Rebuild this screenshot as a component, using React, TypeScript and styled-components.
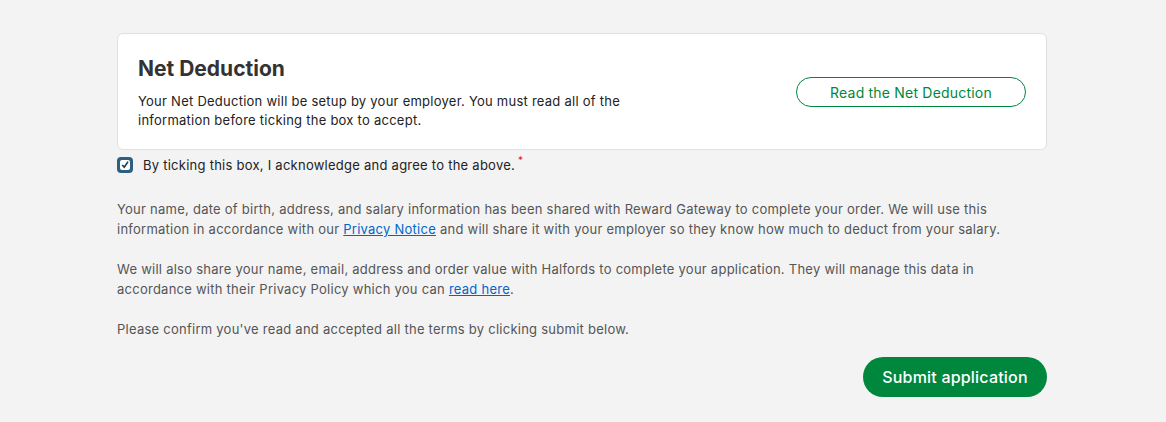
import * as React from 'react';
import styled, { createGlobalStyle } from 'styled-components';

const GlobalStyle = createGlobalStyle`
  body {
    margin: 0;
    background: #f3f3f3;
    font-family: Inter, "Noto Sans", sans-serif;
    color: #333;
  }
`;

const Page = styled.div`
  padding: 33px 119px 25px 117px;
`;

const Card = styled.section`
  display: flex;
  align-items: center;
  justify-content: space-between;
  background: #fff;
  border: 1px solid #e0e0e0;
  border-radius: 6px;
  padding: 20px 20px 19px;
`;

const CardText = styled.div`
  max-width: 540px;
`;

const Title = styled.h2`
  margin: 0 0 8px;
  font-size: 21px;
  font-weight: 700;
  line-height: 30px;
  color: #333;
`;

const Body = styled.p`
  margin: 0;
  font-size: 13px;
  letter-spacing: 0.25px;
  line-height: 19px;
  color: #222;
`;

const OutlineButton = styled.button`
  width: 230px;
  height: 30px;
  border: 1px solid #00873e;
  border-radius: 15px;
  background: #fff;
  color: #00873e;
  font-family: inherit;
  font-size: 14px;
  letter-spacing: 0.2px;
  cursor: pointer;
`;

const CheckRow = styled.label`
  display: flex;
  align-items: center;
  gap: 10px;
  margin-top: 6px;
  font-size: 13px;
  letter-spacing: 0.25px;
  line-height: 18px;
  color: #222;
`;

const Box = styled.span`
  display: inline-flex;
  width: 16px;
  height: 16px;
  margin-top: -1px;
`;

const Required = styled.sup`
  color: #e02020;
  font-size: 10px;
  margin-left: 3px;
  vertical-align: 6px;
  line-height: 0;
`;

const Info = styled.p`
  margin: 25px 0 0;
  font-size: 13px;
  letter-spacing: 0.25px;
  line-height: 20px;
  color: #555;
  & + & {
    margin-top: 20px;
  }
`;

const TextLink = styled.a`
  color: #0066cc;
  text-decoration: underline;
`;

const Actions = styled.div`
  display: flex;
  justify-content: flex-end;
  margin-top: 18px;
`;

const SubmitButton = styled.button`
  width: 184px;
  height: 40px;
  border: none;
  border-radius: 20px;
  background: #00873e;
  color: #fff;
  font-family: inherit;
  font-size: 16px;
  font-weight: 500;
  letter-spacing: 0.2px;
  cursor: pointer;
`;

const CheckIcon: React.FC = () => (
  <svg width="16" height="16" viewBox="0 0 16 16">
    <rect x="0" y="0" width="16" height="16" rx="4" fill="#2d5f82" />
    <rect x="3" y="3" width="10" height="10" rx="2" fill="#fff" />
    <path d="M5.2 8 L7.3 10.2 L11 4.6" stroke="#1f3f57" strokeWidth="1.7" fill="none" />
  </svg>
);

const App: React.FC = () => (
  <>
    <GlobalStyle />
    <Page>
      <Card>
        <CardText>
          <Title>Net Deduction</Title>
          <Body>
            Your Net Deduction will be setup by your employer. You must read all of the
            information before ticking the box to accept.
          </Body>
        </CardText>
        <OutlineButton type="button">Read the Net Deduction</OutlineButton>
      </Card>
      <CheckRow>
        <Box>
          <CheckIcon />
        </Box>
        <span>
          By ticking this box, I acknowledge and agree to the above.<Required>*</Required>
        </span>
      </CheckRow>
      <Info>
        Your name, date of birth, address, and salary information has been shared with Reward
        Gateway to complete your order. We will use this information in accordance with our{' '}
        <TextLink href="#">Privacy Notice</TextLink> and will share it with your employer so they
        know how much to deduct from your salary.
      </Info>
      <Info>
        We will also share your name, email, address and order value with Halfords to complete your
        application. They will manage this data in accordance with their Privacy Policy which you
        can <TextLink href="#">read here</TextLink>.
      </Info>
      <Info>Please confirm you've read and accepted all the terms by clicking submit below.</Info>
      <Actions>
        <SubmitButton type="button">Submit application</SubmitButton>
      </Actions>
    </Page>
  </>
);

export default App;
